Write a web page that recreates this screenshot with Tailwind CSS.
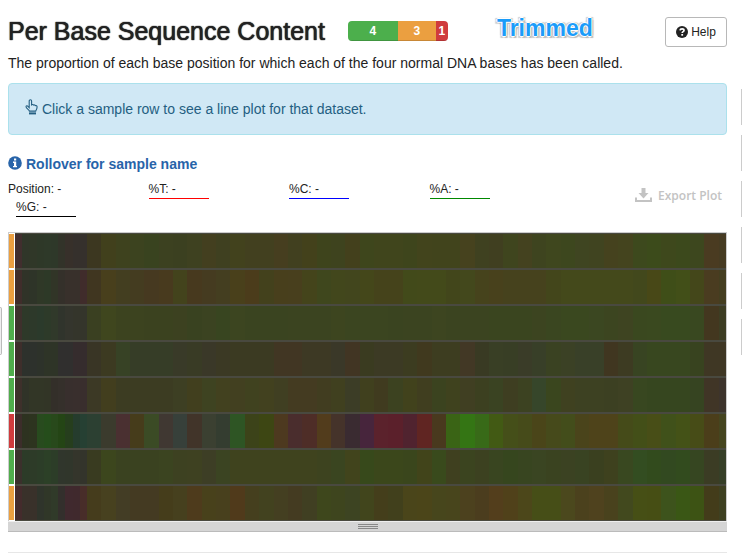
<!DOCTYPE html>
<html lang="en">
<head>
<meta charset="utf-8">
<meta name="viewport" content="width=device-width, initial-scale=1">
<title>Per Base Sequence Content</title>
<script src="https://cdn.jsdelivr.net/npm/@tailwindcss/browser@4"></script>
</head>
<body class="relative min-h-screen overflow-x-hidden bg-white font-['Liberation_Sans',Arial,sans-serif] text-[#222]">

<main class="pl-2 pr-[15px] pt-[17px]">
  <header class="flex items-start">
    <h2 class="whitespace-nowrap text-[25px] leading-7 [text-shadow:0_0_1px_#222,0_0_1px_#222]">Per Base Sequence Content</h2>
    <div class="ml-[23px] mt-1 flex h-5 w-[100px] overflow-hidden rounded text-xs font-bold leading-5 text-white">
      <span class="flex-[50] bg-[#4caf4c] text-center shadow-[inset_0_-1px_0_#00000026]">4</span>
      <span class="flex-[38] bg-[#eb9f40] text-center shadow-[inset_0_-1px_0_#00000026]">3</span>
      <span class="flex-[12] bg-[#d03b3d] text-center shadow-[inset_0_-1px_0_#00000026]">1</span>
    </div>
    <strong class="ml-[49px] text-[23px] leading-[22px] text-[#1b9cf9] [text-shadow:1px_0_white,-1px_0_white,0_1px_white,0_-1px_white,2px_2px_1px_#bbb,-2px_-1px_1px_#ccc,2px_-1px_1px_#ccc,-2px_2px_1px_#ccc]">Trimmed</strong>
    <button type="button" class="ml-auto flex h-[30px] w-[62px] items-center justify-center gap-[3px] rounded-[3px] border border-[#b8b8b8] bg-white text-xs">
      <svg class="size-3" viewBox="0 0 12 12" aria-hidden="true"><circle cx="6" cy="6" r="6" fill="#222"/><path d="M4 4.4C4.2 2.3 8 2.3 8 4.4C8 5.7 6.2 5.6 6.2 7" fill="none" stroke="#fff" stroke-width="1.7"/><path d="M5.3 8h1.8v1.7H5.3z" fill="#fff"/></svg>
      Help
    </button>
  </header>

  <p class="mt-[6px] whitespace-nowrap text-sm leading-5">The proportion of each base position for which each of the four normal DNA bases has been called.</p>

  <div class="mt-[10px] flex h-[52px] items-center gap-1 rounded border border-[#abe1ec] bg-[#d0e8f5] px-4 text-sm text-[#245f82]">
    <svg class="-mt-1 h-4 w-[13px] shrink-0" viewBox="0 0 13 16" fill="none" stroke="#245f82" stroke-width="1.1" aria-hidden="true"><path d="M4.2 8.7V2.1C4.2.3 6.6.3 6.6 2.1v3.7c.7-.6 1.5-.4 1.8.3.8-.4 1.6-.2 1.9.5 1-.3 1.8.2 1.8 1.2 0 2.4-1 3-1.4 4.3H4.4C4.2 10.8 1 9.2 1 7.8c0-1.3 1.3-1.4 2-.4z"/><path d="M4 14.4h7" stroke-width="2"/></svg>
    <span>Click a sample row to see a line plot for that dataset.</span>
  </div>

  <h4 class="mt-[19px] flex h-5 items-center gap-1 text-sm font-bold text-[#2864a9]">
    <svg class="-mt-0.5 size-[14px]" viewBox="0 0 14 14" aria-hidden="true"><circle cx="7" cy="7" r="6.8" fill="#2864a9"/><path d="M6 2.5h2.2v2H6zM5 5.6h3.2v4.3H9v1.4H5V9.9h1V7H5z" fill="#fff"/></svg>
    Rollover for sample name
  </h4>

  <div class="mt-[7px] flex items-start justify-between">
    <ul class="grid w-[562px] grid-cols-4 text-xs leading-4">
      <li class="h-[18px]">Position: -</li>
      <li><span class="block h-[18px] w-[60px] border-b border-[#f00]">%T: -</span></li>
      <li><span class="block h-[18px] w-[60px] border-b border-[#00f]">%C: -</span></li>
      <li><span class="block h-[18px] w-[60px] border-b border-[#080]">%A: -</span></li>
      <li class="pl-2"><span class="block h-[18px] w-[60px] border-b border-black">%G: -</span></li>
    </ul>
    <button type="button" class="mr-[5px] mt-[7px] flex items-center gap-[6px] whitespace-nowrap font-['Open_Sans',sans-serif] text-xs leading-4 font-semibold text-[#c3c3c3]">
      <svg class="-mt-0.5 h-[14px] w-[17px]" viewBox="0 0 17 14" fill="#c3c3c3" aria-hidden="true"><path d="M6.5 0h4v5h3l-5 5.5-5-5.5h3zM0 9.5h2v2.4h13V9.5h2V14H0z"/></svg>
      Export Plot
    </button>
  </div>

  <section class="mt-[15px] border-x border-t border-[#ccc]" aria-label="Base composition heatmap">
    <div id="heatmap" class="flex flex-col bg-[#49493f]"></div>
    <div class="-mx-px flex h-[11px] flex-col items-center justify-center gap-px border-b border-t border-b-[#bbb] border-t-[#eee] bg-[#d5d5d5]">
      <i class="h-px w-5 bg-[#888]"></i><i class="h-px w-5 bg-[#888]"></i><i class="h-px w-5 bg-[#888]"></i>
    </div>
  </section>
  <hr class="mt-5 border-[#e7e7e7]">
</main>

<!-- Edges of the toolbars docked at both sides -->
<div class="absolute right-0 top-[89px] flex flex-col gap-[10px]" aria-hidden="true">
  <i class="h-9 w-px bg-[#ccc]"></i><i class="h-9 w-px bg-[#ccc]"></i><i class="h-9 w-px bg-[#ccc]"></i><i class="h-9 w-px bg-[#ccc]"></i><i class="h-9 w-px bg-[#ccc]"></i><i class="h-9 w-px bg-[#ccc]"></i>
</div>
<div class="absolute left-0 top-[307px] h-12 w-0.5 rounded-r border-y border-r border-[#bbb] bg-[#eee]" aria-hidden="true"></div>

<script>
// Each row: ten single-base bins | two-base bins, the last bin being a single base.
// "colour*n" stands for n equal bins.
const STATUS = { warn: '#eb9f40', pass: '#50ac4c', fail: '#d03b3d' };
const ROWS = [
 ['warn', '412e2e 303629 303728 2e3828 2e3929 2e3829 323329 37302a 35302c 35302c | 3c3720 41401c 3e421e 3c431f 39431f 3c4120 3b4020 3e4120 433f1f 3f4020 42421d 42401f*2 463e1f 41401f 43411b 3e441c 3e431e 43401c 3e461c 40451c 40451c 3e451c 42441c 41441c*2 46421e 3f4120 403f20 3f451e 44421f 3e441f 3f471e 3d471e 3f4521 404420 45421e 44441e 3d491d 3c4b1b 3e481c 3c491c 3d471e 4a3b21 463b22'],
 ['warn', '402d2b 303328 2e3428 2f3827 2d3927 313527 34302a 38302b 38302b 402c2b | 403620 483f1c 433e20 443c20 463920 483a1e 43431c 47391e 453b20 443e20 49401b 4b3c1b 43411c 483f1c 483f1d 44441b 3f471d 42471c 42461d 44471a 45431b*2 424a1a 434a1a*2 42461b 43481c 46431c 48411c 46421d*3 43461b 44491b*5 42481c 484817 3f4e18 424f18 44471a 4a3c20 443e20'],
 ['pass', '3e302c 2e3929 2d392a 2b3a2b 2d3a29 30392a 30342c 34352d 34352b 34352b | 3a4021 3f461e 3c431f*2 3b421f*2 3c4120 394220 3b4321 384520 3c4520 3a4420*3 3b4420*3 3d451f 3b4520*3 3a4420 3b4420*2 3d4520 3b4420*3 3a451f*3 3c4420 3a4620 3a481f*2 3b4721 3c4520 3e4421 3a481f 3a491f 384a1f*2 394820 43371f 3d3d23'],
 ['pass', '3e2e2b 2d312c 2d312c 2d322a 2e3427 2e3427 302f2e 302f2e 352c2d 352c2d | 393525 3c3a21 374225 363d27*3 393a28 393b25 3a3828 3b3924 3b3a22*3 413623*2 3d3924*2 3a3828 413523 3a3b20 3c3a24*2 3c3c20 40391e 3d3d20*2 423825 393a23 393f25 383e25 3a3c28 383f28 3a4222 3b4125 394028*2 403620 3d3b22 384422 38471f*3 38431f 3f3724*2'],
 ['pass', '3e302b 303328 323626 323626 323526 332f29 35302b 382f2d 392f2d 392e2d | 3c3925 423e1e 3c3c22*4 3d3f23 413f1e 3e4321 42411f 424020 40421f 42411f 403f22 443b21*2 413d20 40401f 3c3d26 40401e 403b1f 3c4220 41421c 403e1f 3b431f 3f421e 403f22 3c4020 3a4322 3e3e21 3c4221 36462a 3a461e 3f4120 3d4122*2 3c4022 3e4123 384720 36461f*3 364421 403526 3d342c'],
 ['fail', '3c2d2a 2d3220 2d341f 284b1e 254d1b 28491b 244515 263e1d 253c2d 264033 | 2c4032 3b3b2d 4a3031 463c1b 3b4b25 403832 37403a 413429 3b4031 343d30 2e5524 3c4319 3d4613 4d391f 4a2d2d 4e2d27 523c1c 45332a 3a2b31 47253c 5b222c 5b202b 50232f 602522 49391e 3a6415 347514 386a18 425a14 454f19 464b1a 4a4519 464a1b 434d1b 4a441b 4e431a*2 454b19 434f18 484e17 40511a 445217 474c17 4b3e1a 45451f'],
 ['pass', '3b302c 2c3b28 2d3b28 2c3d28 2c4027 2c3d28 30362c 30362b 34352b 33342b | 393b20 3c461d 3a4220*3 3b4420 3d4121 3e4121 3d3e25 3b4422 3f431e*6 3d431f 3a4520 41441c 37491b 3b471b*2 3a461c 41441a 394a1c 3f401f 3b441f 3c4120 394520 36461e 384520 3a4522 3a4320 3b4222 394322 3a401f 3e411e 394820 334d21 324b1d 324920 324b1e 364621 3b3c24 363f27'],
 ['warn', '442b2c 39312a 39312a 2f342b 303728 303a29 332f2c 40292e 40292d 482d29 | 453c1c 47411f 433d25 443a22*2 453d1b 46401e 4e3b1c 48411b 48401d 503a1b 453f1e 42421f 443f21 443b21 403f22 3e471c 3e451e 3d4422 41451c 443e1b 41401c 4a451a 4b4519 47461c 48451c 4c411e 4b3d1e 533e1c 50411a 4c471a 464e17*2 4b481d 4b411d 4f421e 49421d 42491e 464f15 464e14 3d531c 3a5715 3d5314 433c1a 3e4021']
];
const expand = (list) => list.trim().split(' ').flatMap((item) => {
  const [colour, count] = item.split('*');
  return Array(Number(count || 1)).fill(colour);
});
const map = document.getElementById('heatmap');
ROWS.forEach(([status, data]) => {
  const [single, paired] = data.split('|').map(expand);
  const row = document.createElement('div');
  row.className = 'flex h-9 cursor-pointer';
  const flag = document.createElement('span');
  flag.className = 'w-[6px] shrink-0 border-y border-r border-white';
  flag.style.backgroundColor = STATUS[status];
  row.append(flag);
  const strip = document.createElement('div');
  strip.className = 'flex min-w-0 flex-1 border-y border-[#49493f]';
  const addBin = (colour, bases) => {
    const bin = document.createElement('span');
    bin.style.flex = bases + ' 1 0';
    bin.style.backgroundColor = '#' + colour;
    strip.append(bin);
  };
  single.forEach((colour) => addBin(colour, 1));
  paired.forEach((colour, i) => addBin(colour, i === paired.length - 1 ? 1 : 2));
  row.append(strip);
  map.append(row);
});
</script>
</body>
</html>
